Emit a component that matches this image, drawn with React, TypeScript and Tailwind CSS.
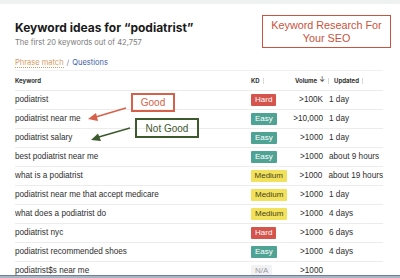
import React from "react"

type Kd = "Hard" | "Easy" | "Medium" | "N/A"

interface Row {
  keyword: string
  kd: Kd
  volume: string
  updated: string
}

const ROWS: Row[] = [
  { keyword: "podiatrist", kd: "Hard", volume: ">100K", updated: "1 day" },
  { keyword: "podiatrist near me", kd: "Easy", volume: ">10,000", updated: "1 day" },
  { keyword: "podiatrist salary", kd: "Easy", volume: ">1000", updated: "1 day" },
  { keyword: "best podiatrist near me", kd: "Easy", volume: ">1000", updated: "about 9 hours" },
  { keyword: "what is a podiatrist", kd: "Medium", volume: ">1000", updated: "about 19 hours" },
  { keyword: "podiatrist near me that accept medicare", kd: "Medium", volume: ">1000", updated: "1 day" },
  { keyword: "what does a podiatrist do", kd: "Medium", volume: ">1000", updated: "4 days" },
  { keyword: "podiatrist nyc", kd: "Hard", volume: ">1000", updated: "6 days" },
  { keyword: "podiatrist recommended shoes", kd: "Easy", volume: ">1000", updated: "4 days" },
  { keyword: "podiatrist$s near me", kd: "N/A", volume: ">1000", updated: "" },
]

const KD_STYLE: Record<Kd, string> = {
  Hard: "bg-[#d5544c] text-white",
  Easy: "bg-[#4fa394] text-white",
  Medium: "bg-[#f1e15b] text-[#4a4520]",
  "N/A": "bg-[#f2f2f4] text-[#9a9aa0]",
}

function Tick() {
  return <span className="inline-block w-px h-[6px] bg-[#d8d8d8] ml-[3px]" />
}

export default function App() {
  return (
    <div className="relative w-[400px] h-[278px] overflow-hidden bg-white flex flex-col [font-family:'Liberation_Sans',Arial,sans-serif]">
      <div className="h-[4px] bg-[#eef3f1] shrink-0" />

      <div className="flex-1 overflow-hidden pl-[15px] pr-[17px]">
        {/* Heading */}
        <h1 className="mt-[14px] text-[12px] leading-[20px] font-bold text-[#1a1a1a] [font-family:Inter,sans-serif]">
          Keyword ideas for “podiatrist”
        </h1>
        <p className="text-[7.5px] leading-[9px] text-[#7a7a7a] [font-family:Inter,sans-serif]">
          The first 20 keywords out of 42,757
        </p>

        {/* Tabs */}
        <div className="mt-[11px] flex items-center gap-[3px] text-[7.5px] leading-[10px] [font-family:Inter,sans-serif] border-b border-[#f0f0f0] pb-[2px]">
          <span className="text-[#d89a5f] border-b border-dotted border-[#d89a5f] leading-[9px]">Phrase match</span>
          <span className="text-[#7a8aa8]">/</span>
          <span className="text-[#3c5ca8]">Questions</span>
        </div>

        {/* Table header */}
        <div className="flex items-center h-[20px] border-b border-[#ececec] text-[6px] font-bold text-[#333] [font-family:Inter,sans-serif]">
          <div className="w-[236px]">Keyword</div>
          <div className="w-[40px] flex items-center">
            KD <Tick />
          </div>
          <div className="w-[38px] flex items-center justify-end">
            Volume <span className="ml-[2px] text-[7px] font-normal">↓</span>
            <Tick />
          </div>
          <div className="flex-1 pl-[5px] flex items-center">
            Updated <Tick />
          </div>
        </div>

        {/* Rows */}
        {ROWS.map((r) => (
          <div
            key={r.keyword}
            className="flex items-center h-[19px] border-b border-[#ececec] text-[8.2px] text-[#2e2e2e] whitespace-nowrap"
          >
            <div className="w-[236px] truncate">{r.keyword}</div>
            <div className="w-[40px]">
              <span className={`inline-block px-[4px] h-[12px] leading-[12px] text-[8px] rounded-[1px] ${KD_STYLE[r.kd]}`}>
                {r.kd}
              </span>
            </div>
            <div className="w-[32px] text-right">{r.volume}</div>
            <div className="flex-1 pl-[6px]">{r.updated}</div>
          </div>
        ))}
      </div>

      <div className="h-[3px] shrink-0 bg-[#a9b4c4] border-t border-[#6f7f96]" />

      {/* Annotations */}
      <div className="absolute left-[262px] top-[15px] w-[129px] h-[33px] border-[1.5px] border-[#c9533d] flex flex-col items-center justify-center text-[10.8px] leading-[13px] text-[#c9533d]">
        <span>Keyword Research For</span>
        <span>Your SEO</span>
      </div>

      <div className="absolute left-[131px] top-[93px] w-[44px] h-[19px] border-2 border-[#d5614b] flex items-center justify-center text-[10px] text-[#d5614b]">
        Good
      </div>
      <div className="absolute left-[135px] top-[118px] w-[64px] h-[20px] border-2 border-[#3d5a2f] flex items-center justify-center text-[10px] text-[#3d5a2f]">
        Not Good
      </div>

      <svg className="absolute left-0 top-0" width="400" height="278" viewBox="0 0 400 278">
        <line x1="126" y1="108" x2="94" y2="117.5" stroke="#d5614b" strokeWidth="1.6" />
        <polygon points="88,119 96,113 98,121" fill="#d5614b" />
        <line x1="130" y1="128" x2="97" y2="137.5" stroke="#3d5a2f" strokeWidth="1.6" />
        <polygon points="91,140 98,133.5 101,141" fill="#3d5a2f" />
      </svg>
    </div>
  )
}
